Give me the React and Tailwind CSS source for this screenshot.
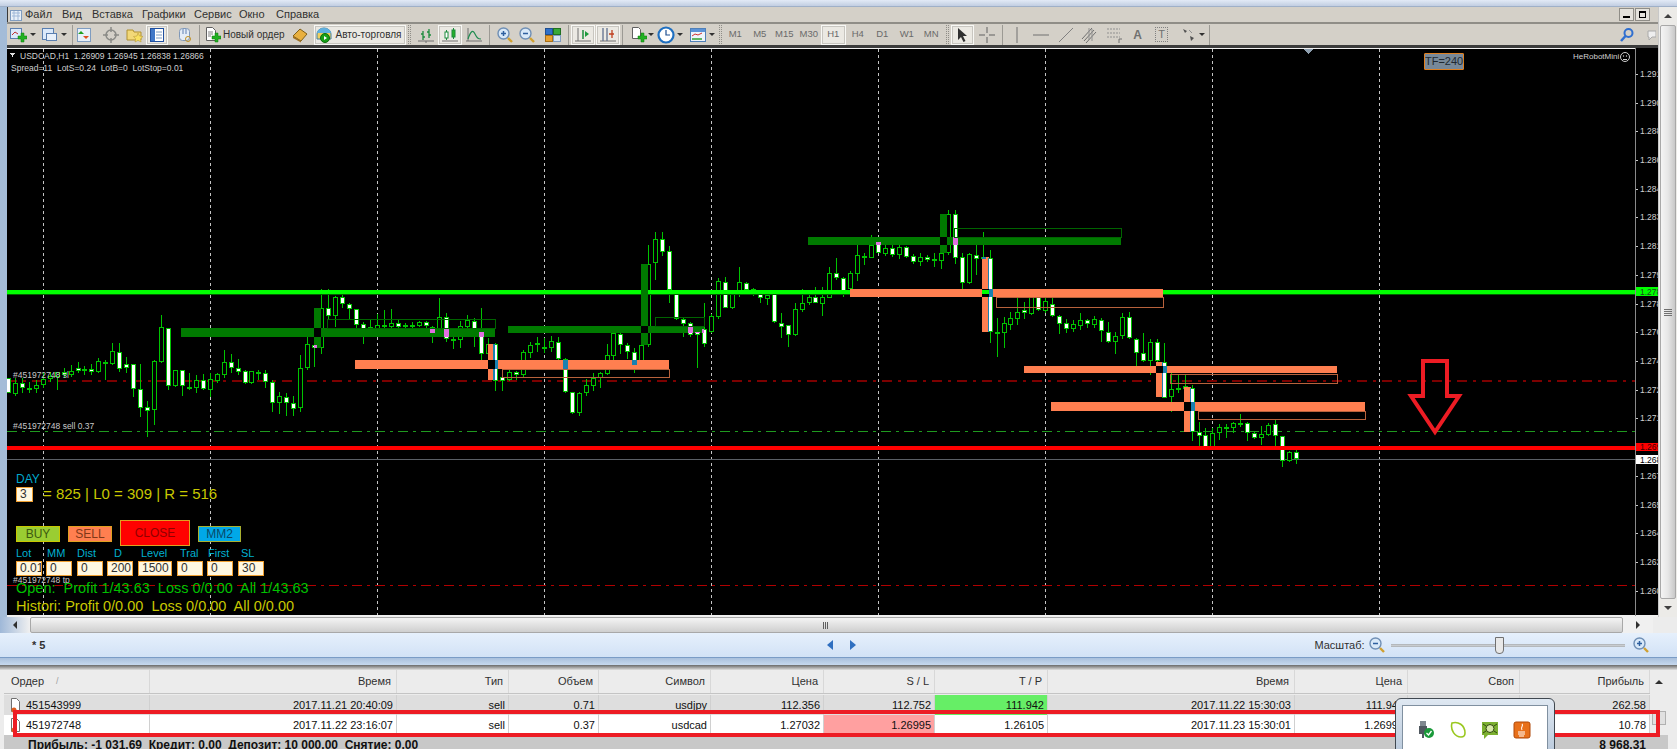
import React from "react";

// [high, bodyTop, bodyBottom, low, white]
const SEG_A = [
  [378,378,393,393,1],[378,383,394,396,0],[378,383,388,393,1],[382,388,390,393,1],[380,385,389,393,0],
  [372,379,385,388,0],[372,376,379,382,0],[372,372,377,390,0],[368,372,375,378,1],[365,371,375,377,0],
  [362,368,371,373,1],[366,369,370,375,1],[364,369,372,375,1],[358,361,372,373,0],[360,362,364,380,1],
  [343,351,364,365,0],[343,352,369,372,1],[357,364,368,373,1],[364,364,389,397,1],[364,389,408,417,1],
  [401,407,411,437,1],
];
const SEG_B = [
  [360,361,410,425,0],[315,327,362,363,0],[328,328,386,390,1],[370,370,386,387,0],[370,370,386,396,1],
  [373,387,388,390,1],[375,380,388,393,0],[374,380,389,390,1],[373,379,390,397,0],[373,374,381,383,0],
  [350,362,375,378,0],[354,362,368,373,1],[359,368,372,375,1],[370,371,383,384,1],[371,371,383,384,0],
  [370,372,373,380,1],[370,373,382,388,1],[380,382,403,412,1],[392,396,403,414,0],[393,397,403,416,1],
  [396,403,409,416,1],[355,368,408,412,0],[337,344,368,370,0],[333,345,348,367,1],[289,308,348,354,0],
  [289,308,316,320,1],[296,297,316,327,0],[294,297,304,308,1],[303,304,309,320,1],[309,309,325,330,1],
  [322,324,329,344,1],[320,327,330,333,0],[314,325,330,337,0],[310,325,327,333,1],[309,323,327,330,0],
  [320,323,327,330,1],[323,325,327,329,0],[322,325,326,329,1],[321,322,326,327,0],[321,322,326,330,1],
  [326,327,333,343,1],[298,317,329,335,0],[313,317,339,342,1],[332,339,340,349,1],[321,326,340,348,0],
  [315,320,327,330,0],[318,321,329,347,1],[308,332,354,360,1],[338,344,354,368,0],[343,344,381,391,1],
  [370,377,381,391,1],[368,372,380,381,0],[371,372,375,380,1],[350,352,375,377,0],[342,345,353,358,0],
  [337,343,345,352,1],[338,347,348,353,1],[336,341,348,352,0],[337,342,359,362,1],[358,359,392,393,1],
  [392,392,413,414,1],[392,393,413,416,0],[379,385,393,396,0],[373,378,386,391,0],[372,373,378,388,0],
  [344,355,374,375,0],[333,333,356,362,0],[333,334,345,354,1],[343,345,352,359,1],[348,352,365,373,1],
  [345,345,362,370,0],[245,264,345,347,0],[232,239,263,280,0],[232,239,252,256,1],[246,251,290,303,1],
  [294,294,319,320,1],[318,319,324,337,1],[322,323,335,337,1],[330,332,335,368,1],[303,329,344,347,1],
];
const SEG_C = [
  [314,316,332,333,0],[278,281,317,319,0],[277,282,308,308,1],[290,290,308,309,0],[267,282,293,297,0],
  [282,283,290,291,1],[288,289,291,296,1],[290,294,298,303,1],[292,295,299,305,0],[293,294,322,323,1],
  [313,323,327,338,1],[325,325,335,347,1],[303,309,335,336,0],[289,303,310,312,0],[290,297,303,305,0],
  [287,297,303,303,1],[287,297,304,316,0],[267,273,298,298,0],[258,273,278,280,1],[277,278,293,297,1],
  [271,273,289,293,0],[245,255,274,281,0],[253,256,257,265,1],[235,245,258,258,0],[241,242,253,253,1],
  [245,248,254,256,0],[245,248,255,257,1],[245,247,255,259,0],[246,247,257,258,1],[254,256,262,264,1],
  [253,257,262,266,0],[255,257,260,262,1],[253,259,260,267,1],[245,253,261,269,0],[210,214,253,255,0],
  [210,214,258,264,1],[253,257,283,289,1],[253,254,283,284,0],[245,255,259,275,1],[232,257,259,260,1],
  [250,258,332,343,1],[318,332,333,357,1],[317,323,333,348,0],[312,318,325,330,0],[298,312,319,325,0],
  [302,310,313,319,1],[297,297,314,315,0],[297,297,310,311,1],[298,301,311,313,0],[298,304,316,317,1],
  [315,316,324,334,1],[319,323,329,333,1],[320,324,329,332,0],[313,320,326,330,0],[319,320,324,328,1],
  [316,319,325,328,0],[318,320,331,342,1],[322,332,342,343,1],[332,336,342,354,0],[313,317,336,339,0],
  [312,317,338,339,1],[338,339,353,366,1],[333,353,361,362,1],[339,342,361,375,0],[339,342,361,370,1],
  [343,362,398,398,1],[373,389,397,412,0],[374,388,389,393,1],[375,386,389,390,0],[385,388,432,441,1],
  [422,432,436,447,1],[428,435,447,447,1],[428,433,447,448,0],[424,427,433,440,0],[424,427,429,438,1],
  [422,423,428,433,0],[414,423,424,427,1],[422,423,433,441,1],[431,433,438,439,1],[426,434,438,445,0],
  [423,425,435,436,0],[419,424,436,447,1],[436,436,461,467,1],[451,452,461,462,0],[450,452,459,464,1],
];

const spread = (seg, start, end) =>
  seg.map((c, i) => ({ x: Math.round(start + (i * (end - start)) / (seg.length - 1)), c }));

const CANDLES = [
  ...spread(SEG_A, 8, 147),
  ...spread(SEG_B, 154, 704),
  ...spread(SEG_C, 711, 1296),
];

// x, y, w, h for the order boxes drawn over the candles
const GREEN = [
  [181, 328, 314, 9], [314, 308, 7, 40], [508, 326, 196, 7], [641, 264, 7, 81], [808, 237, 313, 8], [940, 214, 7, 39],
];
const SALMON = [
  [355, 360, 314, 9], [488, 344, 7, 36], [850, 289, 313, 8], [982, 257, 7, 75],
  [1024, 366, 313, 7], [1156, 362, 7, 35], [1051, 402, 314, 9], [1184, 387, 7, 45],
];
const CROSS = [[314, 328, 7, 9], [641, 326, 7, 7], [940, 237, 7, 8], [488, 360, 7, 9], [982, 289, 7, 8], [1156, 366, 7, 7], [1184, 402, 7, 9]];
const OUTLINE_G = [[327.5, 319, 168, 9], [655.5, 317, 49, 9], [954.5, 228, 167, 9]];
const OUTLINE_S = [[502.5, 369, 167, 8], [996.5, 297, 167, 10], [1170.5, 374, 167, 9], [1198.5, 411, 167, 8]];

const overlap = (x, t, b, r) => {
  const left = Math.max(x - 2, r[0]);
  const right = Math.min(x + 3, r[0] + r[2]);
  const top = Math.max(t, r[1]);
  const bot = Math.min(b, r[1] + r[3]);
  return right > left && bot > top ? [left, top, right - left, bot - top] : null;
};

const PRICES = [
  ["1.291", 74], ["1.290", 103], ["1.288", 131], ["1.286", 160], ["1.284", 189], ["1.283", 217], ["1.281", 246], ["1.279", 275],
  ["1.278", 304], ["1.276", 332], ["1.274", 361], ["1.272", 390], ["1.271", 418], ["1.267", 476], ["1.265", 505], ["1.264", 533], ["1.262", 562], ["1.260", 591],
];

const Chart = () => (
  <svg className="absolute left-0 top-0" width="1651" height="572" viewBox="7 45 1651 572" shapeRendering="crispEdges">
    <rect x="7" y="45" width="1651" height="3" fill="#3c3c3c" />
    <rect x="7" y="48" width="1628" height="1" fill="#f0f0f0" />
    <rect x="7" y="615" width="1651" height="2" fill="#f0f0f0" />
    <rect x="1635" y="48" width="1" height="568" fill="#8a8a8a" />
    {[43, 210, 377, 544, 711, 878, 1045, 1212, 1379].map((x) => (
      <line key={x} x1={x + 0.5} x2={x + 0.5} y1="49" y2="615" stroke="#c4c4c4" strokeDasharray="3 3" />
    ))}
    <line x1="7" x2="1635" y1="380.5" y2="380.5" stroke="#7c0000" strokeWidth="2" strokeDasharray="10 6 3 6" />
    <line x1="7" x2="1635" y1="431.5" y2="431.5" stroke="#1f9a1f" strokeDasharray="10 5 3 5" />
    <line x1="7" x2="1635" y1="585.5" y2="585.5" stroke="#b00000" strokeDasharray="10 5 3 5" />
    <rect x="7" y="459" width="1628" height="1" fill="#5a5f66" />
    {CANDLES.map(({ x, c }, i) => (
      <g key={i}>
        <rect x={x} y={c[0]} width="1" height={c[3] - c[0]} fill="#00c400" />
        <rect x={x - 1.5} y={c[1] + 0.5} width="4" height={Math.max(c[2] - c[1] - 1, 1)} fill={c[4] ? "#ffffff" : "#000000"} stroke="#00c400" />
      </g>
    ))}
    <rect x="7" y="290" width="1628" height="4" fill="#00ff00" />
    <rect x="7" y="294" width="1628" height="1" fill="#006000" />
    <rect x="7" y="446" width="1628" height="4" fill="#ff0000" />
    {GREEN.map((r, i) => <rect key={i} x={r[0]} y={r[1]} width={r[2]} height={r[3]} fill="#007a00" />)}
    {SALMON.map((r, i) => <rect key={i} x={r[0]} y={r[1]} width={r[2]} height={r[3]} fill="#ff7f50" />)}
    {CANDLES.filter(({ c }) => c[4]).flatMap(({ x, c }, i) => [
      ...GREEN.map((r, j) => {
        const o = overlap(x, c[1], c[2], r);
        return o && <rect key={`g${i}-${j}`} x={o[0]} y={o[1]} width={o[2]} height={o[3]} fill="#e070e0" />;
      }),
      ...SALMON.map((r, j) => {
        const o = overlap(x, c[1], c[2], r);
        return o && <rect key={`s${i}-${j}`} x={o[0]} y={o[1]} width={o[2]} height={o[3]} fill="#1a80b0" />;
      }),
    ])}
    {CROSS.map((r, i) => <rect key={i} x={r[0]} y={r[1]} width={r[2]} height={r[3]} fill="#000000" />)}
    <rect x="982" y="290" width="7" height="4" fill="#00ff00" />
    {OUTLINE_G.map((r, i) => <rect key={i} x={r[0]} y={r[1]} width={r[2]} height={r[3]} fill="none" stroke="#006400" />)}
    {OUTLINE_S.map((r, i) => <rect key={i} x={r[0]} y={r[1]} width={r[2]} height={r[3]} fill="none" stroke="#b8623c" />)}
    {PRICES.map(([p, y]) => (
      <g key={p}>
        <rect x="1636" y={y} width="2" height="1" fill="#c8c8c8" />
        <text x="1640" y={y + 3} fontSize="8.5" fill="#d0d0d0" fontFamily="Liberation Sans">{p}</text>
      </g>
    ))}
    <rect x="1636" y="287" width="22" height="9" fill="#00ff00" />
    <text x="1640" y="294.500" fontSize="8.5" fill="#204020" fontFamily="Liberation Sans">1.278</text>
    <rect x="1636" y="443" width="22" height="8" fill="#ff0000" />
    <text x="1640" y="450" fontSize="8.5" fill="#400000" fontFamily="Liberation Sans">1.269</text>
    <rect x="1636" y="455" width="22" height="9" fill="#ffffff" />
    <text x="1640" y="462.500" fontSize="8.5" fill="#000000" fontFamily="Liberation Sans">1.268</text>
    <polygon points="1303,49 1313,49 1308,54" fill="#8fa0b0" />
    <polygon points="10,53 15,53 12.5,57" fill="#e0e0e0" />
    <g shapeRendering="auto">
      <polygon points="1423,361 1447,361 1447,396 1459,396 1435,432 1411,396 1423,396" fill="none" stroke="#ed1c24" strokeWidth="4" />
      <circle cx="1625" cy="57" r="4.5" fill="none" stroke="#d0d0d0" />
      <circle cx="1623.5" cy="56" r="0.7" fill="#d0d0d0" />
      <circle cx="1626.5" cy="56" r="0.7" fill="#d0d0d0" />
      <path d="M1623 59.5h4" stroke="#d0d0d0" fill="none" />
    </g>
  </svg>
);

const Field = ({ w, children }) => (
  <div className={`${w} h-[15px] bg-[#fff8e1] border border-[#f0a030] text-[#303030] text-[12px] leading-[13px] pl-[3px] overflow-hidden`}>{children}</div>
);

const FIELDS = [
  ["Lot", "0.01", "w-[26px]", "mr-[4px]", "pl-[0px]"], ["MM", "0", "w-[26px]", "mr-[5px]", "pl-[1px]"], ["Dist", "0", "w-[26px]", "mr-[4px]", "pl-[0px]"], ["D", "200", "w-[26px]", "mr-[5px]", "pl-[7px]"],
  ["Level", "1500", "w-[34px]", "mr-[5px]", "pl-[3px]"], ["Tral", "0", "w-[26px]", "mr-[4px]", "pl-[3px]"], ["First", "0", "w-[26px]", "mr-[5px]", "pl-[1px]"], ["SL", "30", "w-[26px]", "mr-[0px]", "pl-[3px]"],
];

const Panel = () => (
  <div className="absolute left-[9px] top-[427px] flex flex-col w-[320px]">
    <div className="h-[15px] leading-[15px] text-[12px] text-[#00a8cc]">DAY</div>
    <div className="flex h-[15px] items-center">
      <Field w="w-[17px]">3</Field>
      <span className="ml-[10px] text-[15px] text-[#c8c800] whitespace-pre">= 825 | L0 = 309 | R = 516</span>
    </div>
    <div className="flex items-start h-[26px] mt-[18px]">
      <button className="w-[44px] h-[16px] mt-[6px] mr-[8px] bg-[#9acd32] border border-[#c8c800] text-[12px] leading-[14px] text-[#3c5a10]">BUY</button>
      <button className="w-[44px] h-[16px] mt-[6px] mr-[8px] bg-[#ff7f50] border border-[#e0a020] text-[12px] leading-[14px] text-[#803818]">SELL</button>
      <button className="w-[70px] h-[26px] mr-[8px] bg-[#ff0000] border border-[#e0a020] text-[12px] text-[#900000]">CLOSE</button>
      <button className="w-[43px] h-[16px] mt-[6px] bg-[#00a8e8] border border-[#a8b030] text-[12px] leading-[14px] text-[#084868]">MM2</button>
    </div>
    <div className="flex h-[15px]">
      {FIELDS.map(([l, , w, m, p]) => (
        <div key={l} className={`${w} ${m} ${p} text-[11px] leading-[15px] text-[#00b0d0] whitespace-nowrap`}>{l}</div>
      ))}
    </div>
    <div className="flex">
      {FIELDS.map(([l, v, w, m]) => (
        <div key={l} className={m}><Field w={w}>{v}</Field></div>
      ))}
    </div>
    <div className="mt-[4px] h-[16px] leading-[16px] text-[14.5px] text-[#00c000] whitespace-pre">Open:  Profit 1/43.63  Loss 0/0.00  All 1/43.63</div>
    <div className="mt-[1px] h-[18px] leading-[18px] text-[14.5px] text-[#c8c800] whitespace-pre">Histori: Profit 0/0.00  Loss 0/0.00  All 0/0.00</div>
  </div>
);

const Plus = () => <path d="M9 10h3V7h3v3h-0 3v3h-3v3h-3v-3H9z" fill="#22b022" stroke="#0c7c0c" strokeWidth="0.5" />;

const Ico = ({ children }) => <svg width="18" height="18" viewBox="0 0 18 18" className="shrink-0">{children}</svg>;

const AddChart = () => <Ico><rect x="1.5" y="2.5" width="11" height="10" fill="#dbe9fa" stroke="#5a7fb0" /><path d="M3 9l3-3 3 2" stroke="#c03030" fill="none" /><Plus /></Ico>;
const Profiles = () => <Ico><rect x="1.5" y="2.5" width="11" height="11" fill="#dbe9fa" stroke="#5a7fb0" /><rect x="5.5" y="7.5" width="10" height="7" fill="#e8f0fa" stroke="#5a7fb0" /></Ico>;
const Market = () => <Ico><rect x="2.5" y="2.5" width="13" height="13" fill="#e8f0fa" stroke="#7f9cc0" /><path d="M6 5l3 3H3z" fill="#20a020" /><path d="M11 13l-3-3h6z" fill="#e05020" /></Ico>;
const Nav = () => <Ico><circle cx="9" cy="9" r="5" fill="none" stroke="#8a8a86" strokeWidth="1.5" /><path d="M9 1v5M9 12v5M1 9h5M12 9h5" stroke="#8a8a86" strokeWidth="1.5" /></Ico>;
const Folder = () => <Ico><path d="M1 4h6l1 2h7v8H1z" fill="#f2d878" stroke="#b09030" /><path d="M12 7l1.500 3 3.500.5-2.500 2.300.6 3.200-3.100-1.600-3 1.600.6-3.200L7.500 10.500 11 10z" fill="#f8e060" stroke="#b09030" strokeWidth="0.5" /></Ico>;
const Terminal = () => <Ico><rect x="2.500" y="2.500" width="13" height="13" fill="#fff" stroke="#2050a0" /><rect x="3" y="3" width="4" height="12" fill="#4078c8" /><path d="M8 6h6M8 9h6M8 12h6" stroke="#7f9cc0" /></Ico>;
const Tester = () => <Ico><rect x="3.500" y="2.500" width="10" height="12" rx="3" fill="#e4ecf6" stroke="#8098b8" /><circle cx="12" cy="13" r="2.500" fill="none" stroke="#c09020" /><path d="M7 3v5M10 3v5" stroke="#6080b0" /></Ico>;
const NewOrder = () => <Ico><path d="M3.500 1.500h6l3 3v10h-9z" fill="#fff" stroke="#606060" /><path d="M5 6h5M5 8h5M5 10h3" stroke="#808080" /><Plus /></Ico>;
const Chest = () => <Ico><path d="M2 10l7-7 7 5-6 7z" fill="#e8b040" stroke="#806018" /><path d="M2 10l8 5v1.500L2 12z" fill="#a07020" /></Ico>;
const Auto = () => <Ico><path d="M2 8a7 6 0 0 1 14 0v5H2z" fill="#f0d060" stroke="#4080a0" /><path d="M2 7a7 5 0 0 1 14 0z" fill="#60b0e0" /><circle cx="10" cy="12" r="4.500" fill="#18a018" stroke="#0c6c0c" /><path d="M9 10l3 2-3 2z" fill="#fff" /></Ico>;
const Bars = () => <Ico><path d="M1 15h16M9 15v2" stroke="#707070" /><path d="M6 5v9M4 8h2M6 11h2M12 3v9M10 6h2M12 9h2" stroke="#1c8c3c" strokeWidth="1.300" fill="none" /></Ico>;
const Candle = () => <Ico><path d="M1 15h16" stroke="#707070" /><path d="M5.500 4v10M12.500 2v11" stroke="#1c8c3c" /><rect x="4" y="6" width="3" height="6" fill="#fff" stroke="#1c8c3c" /><rect x="11" y="4" width="3" height="7" fill="#28b028" stroke="#1c8c3c" /></Ico>;
const LineI = () => <Ico><path d="M1 15h16M3 2v13" stroke="#707070" /><path d="M3 13c3-9 5-9 7-5s3 5 6 5" stroke="#208c50" strokeWidth="1.200" fill="none" /></Ico>;
const Lens = ({ minus }) => (
  <Ico>
    <circle cx="7.500" cy="7.500" r="5.500" fill="#d8e8f8" stroke="#6f8fb5" strokeWidth="1.400" />
    <path d="M5 7.500h5" stroke="#2f60a0" strokeWidth="1.500" />
    {!minus && <path d="M7.500 5v5" stroke="#2f60a0" strokeWidth="1.500" />}
    <path d="M12 12l4 4" stroke="#d0a030" strokeWidth="2.400" />
  </Ico>
);
const Tile = () => <Ico><rect x="1.500" y="2.500" width="7" height="6" fill="#3070c8" stroke="#204f90" /><rect x="9.500" y="2.500" width="7" height="6" fill="#38a838" stroke="#207020" /><rect x="1.500" y="9.500" width="7" height="6" fill="#e8a030" stroke="#a87018" /><rect x="9.500" y="9.500" width="7" height="6" fill="#d8e4f2" stroke="#7f9cc0" /></Ico>;
const ShiftEnd = () => <Ico><path d="M1 15h16M4 2v13" stroke="#707070" /><path d="M9 4v9" stroke="#1c8c3c" strokeWidth="1.500" /><path d="M11 5l4 3-4 3z" fill="#1c9c3c" /></Ico>;
const AutoScroll = () => <Ico><path d="M1 15h16" stroke="#707070" /><path d="M4 2v13M8 2v13" stroke="#607090" strokeWidth="1.300" /><path d="M13 4v8M10 8h5" stroke="#c04020" strokeWidth="1.300" /></Ico>;
const Template = () => <Ico><path d="M3.500 1.500h6l2 2v9h-8z" fill="#fff" stroke="#606060" /><Plus /></Ico>;
const Clock = () => <Ico><circle cx="9" cy="9" r="7.500" fill="#fff" stroke="#1f6fc0" strokeWidth="2.200" /><path d="M9 4v5h4" stroke="#1f4f90" strokeWidth="1.200" fill="none" /></Ico>;
const WindowI = () => <Ico><rect x="1.500" y="2.500" width="15" height="13" fill="#eef4fb" stroke="#5080b8" /><rect x="2" y="3" width="14" height="3" fill="#5b93d8" /><path d="M3 10l3-2 3 1 4-2" stroke="#d03030" fill="none" /><path d="M3 13h10" stroke="#30a030" strokeWidth="1.500" /></Ico>;
const Cursor = () => <Ico><path d="M5 2l9 8h-4l2.500 5-2 1-2.500-5L5 14z" fill="#303030" /></Ico>;
const Cross = () => <Ico><path d="M9 1v6M9 11v6M1 9h6M11 9h6" stroke="#606060" /></Ico>;
const VLine = () => <Ico><path d="M9 1v16" stroke="#707070" /></Ico>;
const HLine = () => <Ico><path d="M1 9h16" stroke="#707070" /></Ico>;
const Trend = () => <Ico><path d="M2 16L16 2" stroke="#808080" /></Ico>;
const Channel = () => <Ico><path d="M1 13L11 2M3 15L13 4M5 17L15 6" stroke="#707070" /><path d="M8 2v12M11 3v12" stroke="#909090" /></Ico>;
const Fibo = () => <Ico><path d="M2 3h13M2 7h13M2 11h13" stroke="#909090" strokeDasharray="2 1" /><path d="M14 13v4M14 13h3" stroke="#707070" /></Ico>;
const Arrows = () => <Ico><path d="M3 3l4 2-2 2zM10 10l4 2-3 3z" fill="#505050" /><path d="M9 4l3 3" stroke="#909090" /></Ico>;
const Caret = () => <span className="w-[9px] flex justify-center"><span className="border-x-[3px] border-t-[3px] border-x-transparent border-t-[#303030]" /></span>;
const Sep = ({ cls }) => <span className={`w-px h-[20px] bg-[#9c9a94] ${cls}`} />;
const Grip = ({ cls }) => <span className={`w-[3px] h-[19px] border-x border-dotted border-[#8f8d87] ${cls}`} />;
const Gap = ({ w }) => <span className={w} />;
const Tool = ({ w, on, children }) => (
  <span className={`${w} h-[20px] flex items-center justify-center ${on ? "bg-[#ebe9e3] border border-[#f8f8f5] shadow-[inset_0_0_0_1px_#c8c6c0]" : ""}`}>{children}</span>
);

const MENU = [["Файл", "w-[37px]"], ["Вид", "w-[30px]"], ["Вставка", "w-[50px]"], ["Графики", "w-[52px]"], ["Сервис", "w-[45px]"], ["Окно", "w-[37px]"], ["Справка", "w-[60px]"]];
const PERIODS = ["M1", "M5", "M15", "M30", "H1", "H4", "D1", "W1", "MN"];

const MenuBar = () => (
  <div className="h-[15px] bg-[#d4d0c8] border-l border-[#3a3a3a] flex items-center text-[11px] text-[#303030] ml-[7px] pr-[8px]">
    <svg width="14" height="14" viewBox="0 0 14 14" className="ml-[1px] mr-[2px]"><rect x="1.500" y="2.500" width="11" height="10" fill="#e8f0f8" stroke="#7f9cc0" /><path d="M3 5h8M3 8h8M5 3v9M9 3v9" stroke="#9fb8d8" /></svg>
    {MENU.map(([m, w]) => <span key={m} className={w}>{m}</span>)}
    <span className="ml-auto w-[15px] h-[13px] bg-[#e4e2dc] border border-[#8f8d87] flex items-end justify-center pb-[2px]"><span className="w-[7px] h-[2px] bg-black" /></span>
    <span className="ml-[1px] w-[15px] h-[13px] bg-[#e4e2dc] border border-[#8f8d87] flex items-center justify-center"><span className="w-[7px] h-[7px] border border-black border-t-2" /></span>
  </div>
);

const Toolbar = () => (
  <div className="h-[23px] ml-[7px] bg-[#d4d0c8] border-t-2 border-[#8f8d87] flex items-center text-[11px] text-[#303030] whitespace-nowrap">
    <Tool w="w-[22px]"><AddChart /></Tool>
    <span className="-ml-[1px]"><Caret /></span>
    <Gap w="w-[4px]" />
    <Tool w="w-[18px]"><Profiles /></Tool><Caret />
    <Sep cls="ml-[4px]" />
    <Tool w="w-[22px]"><Market /></Tool>
    <Gap w="w-[5px]" />
    <Tool w="w-[22px]"><Nav /></Tool>
    <Gap w="w-[2px]" />
    <Tool w="w-[22px]"><Folder /></Tool>
    <Tool w="w-[22px]" on><Terminal /></Tool>
    <Gap w="w-[6px]" />
    <Tool w="w-[22px]"><Tester /></Tool>
    <Sep cls="mx-[3px]" />
    <span className="h-[20px] flex items-center w-[85px]"><NewOrder /><span className="ml-[2px] text-[10px]">Новый ордер</span></span>
    <Tool w="w-[24px]"><Chest /></Tool>
    <Gap w="w-[2px]" />
    <Tool w="w-[92px]" on><Auto /><span className="ml-[2px] mr-[3px] text-[10px]">Авто-торговля</span></Tool>
    <Grip cls="mx-[2px]" />
    <Gap w="w-[1px]" />
    <Tool w="w-[24px]"><Bars /></Tool>
    <Tool w="w-[24px]" on><Candle /></Tool>
    <Tool w="w-[24px]"><LineI /></Tool>
    <Sep cls="mx-[3px]" />
    <Gap w="w-[1px]" />
    <Tool w="w-[22px]"><Lens /></Tool>
    <Tool w="w-[22px]"><Lens minus /></Tool>
    <Gap w="w-[4px]" />
    <Tool w="w-[22px]"><Tile /></Tool>
    <Sep cls="ml-[4px] mr-[2px]" />
    <Tool w="w-[24px]" on><ShiftEnd /></Tool>
    <Gap w="w-[1px]" />
    <Tool w="w-[24px]" on><AutoScroll /></Tool>
    <Sep cls="ml-[2px] mr-[7px]" />
    <Tool w="w-[16px]"><Template /></Tool><Caret />
    <Gap w="w-[2px]" />
    <Tool w="w-[18px]"><Clock /></Tool><Caret />
    <Gap w="w-[5px]" />
    <Tool w="w-[18px]"><WindowI /></Tool><Caret />
    <Grip cls="ml-[3px] mr-[1px]" />
    {PERIODS.map((p) => (
      <Tool key={p} w="w-[24.500px]" on={p === "H1"}><span className="text-[9.500px] text-[#6a6a6a]">{p}</span></Tool>
    ))}
    <Grip cls="mx-[2px]" />
    <Tool w="w-[23px]" on><Cursor /></Tool>
    <Gap w="w-[1px]" />
    <Tool w="w-[25px]"><Cross /></Tool>
    <Sep cls="mx-[2px]" />
    <Tool w="w-[24px]"><VLine /></Tool>
    <Tool w="w-[25px]"><HLine /></Tool>
    <Tool w="w-[24px]"><Trend /></Tool>
    <Tool w="w-[24px]"><Channel /></Tool>
    <Tool w="w-[24px]"><Fibo /></Tool>
    <Tool w="w-[24px]"><span className="text-[12px] font-bold text-[#707070]">A</span></Tool>
    <Tool w="w-[24px]"><span className="w-[13px] h-[15px] border border-dotted border-[#808080] text-[11px] leading-[13px] text-center text-[#707070]">T</span></Tool>
    <Gap w="w-[6px]" />
    <Tool w="w-[18px]"><Arrows /></Tool><Caret />
    <Sep cls="mx-[2px]" />
    <span className="ml-auto mr-[2px] flex items-center">
      <svg width="16" height="16" viewBox="0 0 16 16"><circle cx="9.500" cy="6" r="4" fill="none" stroke="#2f6fd0" strokeWidth="2" /><path d="M6.500 9L2 14" stroke="#2f6fd0" strokeWidth="2.500" /></svg>
      <svg width="12" height="14" viewBox="0 0 12 14" className="ml-[9px]"><path d="M4 3h8v6H8l-3 3V9H4z" fill="#eee" stroke="#aaa" /></svg>
    </span>
  </div>
);

const VScroll = () => (
  <div className="w-[19px] flex flex-col bg-[#ecebe8] border-l border-[#c8c8c8]">
    <div className="h-[18px] flex items-center justify-center"><span className="border-x-[4px] border-b-[4px] border-x-transparent border-b-[#404040]" /></div>
    <div className="flex-1 mx-[1px] bg-gradient-to-r from-[#f4f4f4] via-[#e6e6e6] to-[#c8c8c8] border border-[#a8a8a8] rounded-[2px] flex flex-col items-center justify-center gap-[1px]">
      <span className="w-[8px] h-px bg-[#707070]" /><span className="w-[8px] h-px bg-[#707070]" /><span className="w-[8px] h-px bg-[#707070]" /><span className="w-[8px] h-px bg-[#707070]" />
    </div>
    <div className="h-[18px] flex items-center justify-center"><span className="border-x-[4px] border-t-[4px] border-x-transparent border-t-[#404040]" /></div>
  </div>
);

const HScroll = () => (
  <div className="h-[16px] flex bg-[#f0f0f0]">
    <div className="w-[30px] flex items-center justify-center bg-gradient-to-r from-[#9fb8d8] to-[#f0f0f0]"><span className="border-y-[4px] border-r-[4px] border-y-transparent border-r-[#303030]" /></div>
    <div className="flex-1 bg-gradient-to-b from-[#f4f4f4] to-[#cfcfcf] border border-[#a8a8a8] rounded-[2px] flex items-center justify-center gap-[1px] pr-[2px]">
      <span className="w-px h-[7px] bg-[#606060]" /><span className="w-px h-[7px] bg-[#606060]" /><span className="w-px h-[7px] bg-[#606060]" />
    </div>
    <div className="w-[30px] flex items-center justify-center"><span className="border-y-[4px] border-l-[4px] border-y-transparent border-l-[#303030]" /></div>
    <div className="w-[24px] bg-[#ececec]" />
  </div>
);

const Tabs = () => (
  <div className="h-[32px] flex flex-col">
    <div className="h-[25px] flex items-center bg-gradient-to-b from-[#e6f0fc] to-[#d2e2f6] border-b border-[#7a9cc6] relative text-[11px] text-[#303030]">
      <span className="ml-[32px] font-bold">* 5</span>
      <span className="ml-[782px] border-y-[5px] border-r-[6px] border-y-transparent border-r-[#2f6fc0]" />
      <span className="ml-[17px] border-y-[5px] border-l-[6px] border-y-transparent border-l-[#2f6fc0]" />
      <span className="ml-[458px] w-[54px] whitespace-nowrap">Масштаб:</span>
      <Lens minus />
      <span className="ml-[5px] relative w-[234px] h-[3px] bg-[#c8ccd0] border-y border-[#b4b8bc]">
        <span className="absolute left-[104px] -top-[8px] w-[9px] h-[17px] bg-[#e8e8e8] border border-[#707070] rounded-b-[4px]" />
      </span>
      <span className="ml-[7px]"><Lens /></span>
    </div>
    <div className="flex-1 bg-gradient-to-b from-[#a9c0dc] to-[#c6d8ee]" />
  </div>
);

const COLS = ["w-[146px]", "w-[247px]", "w-[112px]", "w-[90px]", "w-[112px]", "w-[113px]", "w-[111px]", "w-[113px]", "w-[247px]", "w-[113px]", "w-[112px]", "w-[130px]"];
const HEAD = ["Ордер", "Время", "Тип", "Объем", "Символ", "Цена", "S / L", "T / P", "Время", "Цена", "Своп", "Прибыль"];
const ROW1 = ["451543999", "2017.11.21 20:40:09", "sell", "0.71", "usdjpy", "112.356", "112.752", "111.942", "2017.11.22 15:30:03", "111.942", "", "262.58"];
const ROW2 = ["451972748", "2017.11.22 23:16:07", "sell", "0.37", "usdcad", "1.27032", "1.26995", "1.26105", "2017.11.23 15:30:01", "1.26995", "", "10.78"];

const DocIcon = () => (
  <svg width="12" height="15" viewBox="0 0 12 15" className="ml-[6px] mr-[4px] shrink-0"><path d="M1.500 .5h5l3 3v10h-8z" fill="#fff" stroke="#707070" /><circle cx="4" cy="12" r="2.500" fill="#e05a1c" /></svg>
);

const Row = ({ data, rowCls, hot }) => (
  <div className={`flex h-[20px] items-center text-[11px] text-[#101010] ${rowCls}`}>
    {data.map((v, i) => (
      <div key={i} className={`${COLS[i]} h-full flex items-center border-r border-[#d0d0d0] ${i === 0 ? "" : "justify-end pr-[3px]"} ${hot[i] || ""}`}>
        {i === 0 && <DocIcon />}{v}
      </div>
    ))}
  </div>
);

const Terminal2 = () => (
  <div className="flex-1 flex flex-col relative bg-[#ececec] overflow-hidden">
    <div className="h-[5px] bg-gradient-to-b from-[#6a6a6a] to-[#e0e0e0]" />
    <div className="flex h-[24px] ml-[4px] mr-[9px]">
      <div className="flex-1 flex flex-col">
        <div className="flex h-[24px] items-center text-[11px] text-[#303030] bg-[#ececec] border-b border-[#c4c4c4]">
          {HEAD.map((h, i) => (
            <div key={i} className={`${COLS[i]} h-full flex items-center border-r border-[#d8d8d8] ${i === 0 ? "pl-[7px] gap-[12px]" : "justify-end pr-[5px]"}`}>
              {h}{i === 0 && <span className="text-[#a0a0a0] text-[9px]">/</span>}
            </div>
          ))}
        </div>
      </div>
      <div className="w-[18px] flex items-center justify-center"><span className="border-x-[4px] border-b-[4px] border-x-transparent border-b-[#303030]" /></div>
    </div>
    <div className="flex ml-[4px] mr-[9px]">
      <div className="flex-1 flex flex-col">
        <div className="h-[1px]" />
        <Row data={ROW1} rowCls="bg-[#dedede]" hot={{ 7: "bg-[#66ee66]" }} />
        <Row data={ROW2} rowCls="bg-white" hot={{ 6: "bg-[#ffa0a0]" }} />
      </div>
      <div className="w-[18px] pt-[17px] flex justify-center bg-[#ececec]"><span className="w-[14px] h-[14px] bg-[#e0e0e0] border border-[#b0b0b0]" /></div>
    </div>
    <div className="ml-[4px] mr-[9px] h-[14px] pt-[5px] bg-[#c8c8c8] flex items-center justify-between text-[12px] font-bold text-[#101010] whitespace-pre pl-[24px] pr-[22px]">
      <span>Прибыль: -1 031.69  Кредит: 0.00  Депозит: 10 000.00  Снятие: 0.00</span>
      <span>8 968.31</span>
    </div>
    {/* red marking around the order row */}
    <div className="absolute left-[13px] top-[45px] w-[1647px] h-[27px] border-[4px] border-[#ed1c24]" />
    {/* tray popup */}
    <div className="absolute left-[1395px] top-[33px] w-[160px] h-[60px] rounded-t-[6px] border border-[#404850] bg-gradient-to-b from-[#dfe8f2] to-[#b8c8da] px-[6px] pt-[6px]">
      <div className="h-full bg-white border border-[#8090a0] flex items-start gap-[14px] pl-[14px] pt-[15px]">
        <svg width="18" height="18" viewBox="0 0 18 18"><rect x="3" y="0" width="6" height="5" fill="#808890" /><rect x="2" y="5" width="8" height="8" fill="#505860" /><path d="M6 13v4" stroke="#505860" strokeWidth="2" /><circle cx="12" cy="12" r="5" fill="#1a9a3a" /><path d="M9.500 12l2 2 3-4" stroke="#fff" strokeWidth="1.300" fill="none" /></svg>
        <svg width="18" height="18" viewBox="0 0 18 18"><path d="M3 2c6-2 13 2 13 10 0 3-2 4-4 4C6 16 1 9 3 2z" fill="#fff" stroke="#9ac820" strokeWidth="1.600" /></svg>
        <svg width="18" height="18" viewBox="0 0 18 18"><path d="M1 1h16v13H7l-4 4v-4H1z" fill="#7cb030" /><circle cx="9" cy="7.500" r="4" fill="#d8e8a8" stroke="#304810" /><path d="M2 3l3 2M16 3l-3 2M2 12l3-2M16 12l-3-2" stroke="#304810" /></svg>
        <svg width="18" height="18" viewBox="0 0 18 18"><rect x="1" y="1" width="16" height="16" rx="2" fill="#e8701a" stroke="#b04808" /><path d="M9 3c2 2-2 3 0 6M5 11h7M5 13h7M6 15h5" stroke="#fff" strokeWidth="1.100" fill="none" /></svg>
      </div>
    </div>
  </div>
);

const App = () => (
  <div className="w-[1677px] h-[749px] overflow-hidden flex flex-col bg-[#ececec] font-['Liberation_Sans',sans-serif]">
    <div className="h-[7px] bg-gradient-to-b from-[#e2eaf6] to-[#c2cee2] border-b border-[#9fb0c8]" />
    <div className="h-[610px] flex">
      <div className="flex-1 flex flex-col min-w-0 relative bg-gradient-to-r from-[#a4bcd8] to-[#d8e4f2]">
        <MenuBar />
        <Toolbar />
        <div className="ml-[7px] flex-1 relative bg-black overflow-hidden">
          <Chart />
          <div className="absolute left-[4px] top-[5px] text-[8.5px] leading-[12px] text-[#d0d0d0] whitespace-pre">
            <div className="pl-[9px]">USDCAD,H1  1.26909 1.26945 1.26838 1.26866</div>
            <div>Spread=11  LotS=0.24  LotB=0  LotStop=0.01</div>
          </div>
          <div className="absolute left-[1417px] top-[8px] w-[40px] h-[17px] bg-[#778899] border border-[#e08020] rounded-[1px] text-[11px] leading-[15px] text-center text-[#202830] whitespace-nowrap">TF=240</div>
          <div className="absolute left-[1566px] top-[6px] text-[8px] leading-[12px] text-[#d0d0d0]">HeRobotMini</div>
          <div className="absolute left-[6px] top-[324px] text-[8.5px] leading-[12px] text-[#c8c8c8]">#451972748 sl</div>
          <div className="absolute left-[6px] top-[375px] text-[8.5px] leading-[12px] text-[#c8c8c8]">#451972748 sell 0.37</div>
          <div className="absolute left-[6px] top-[529px] text-[8.5px] leading-[12px] text-[#c8c8c8]">#451972748 tp</div>
          <Panel />
        </div>
      </div>
      <VScroll />
    </div>
    <HScroll />
    <Tabs />
    <Terminal2 />
  </div>
);

export default App;
